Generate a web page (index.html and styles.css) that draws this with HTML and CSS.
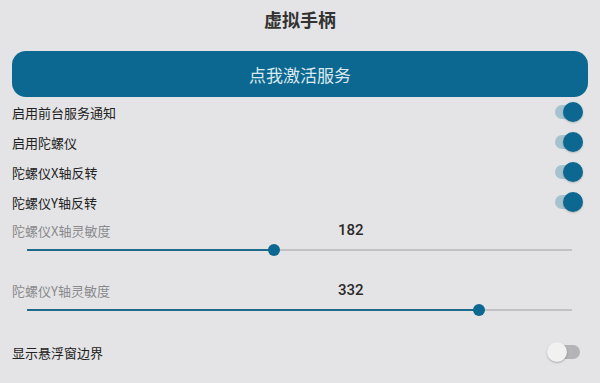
FILE: index.html
```html
<!DOCTYPE html>
<html lang="zh-CN">
<head>
    <meta charset="UTF-8">
    <meta name="viewport" content="width=device-width, initial-scale=1.0">
    <title>虚拟手柄</title>
    <link rel="stylesheet" href="styles.css">
</head>
<body>

    <div class="page">
        <h1 class="title">虚拟手柄</h1>

        <button class="activate">点我激活服务</button>

        <div class="row">
            <span>启用前台服务通知</span>
            <span class="switch on"><span class="track"></span><span class="thumb"></span></span>
        </div>
        <div class="row">
            <span>启用陀螺仪</span>
            <span class="switch on"><span class="track"></span><span class="thumb"></span></span>
        </div>
        <div class="row">
            <span>陀螺仪X轴反转</span>
            <span class="switch on"><span class="track"></span><span class="thumb"></span></span>
        </div>
        <div class="row">
            <span>陀螺仪Y轴反转</span>
            <span class="switch on"><span class="track"></span><span class="thumb"></span></span>
        </div>

        <div class="slider-block">
            <div class="slider-head">
                <span class="slider-label">陀螺仪X轴灵敏度</span>
                <span class="slider-value">182</span>
            </div>
            <div class="slider">
                <div class="slider-fill" style="width: 45.3%"></div>
                <div class="slider-thumb" style="left: 45.3%"></div>
            </div>
        </div>

        <div class="slider-block">
            <div class="slider-head">
                <span class="slider-label">陀螺仪Y轴灵敏度</span>
                <span class="slider-value">332</span>
            </div>
            <div class="slider">
                <div class="slider-fill" style="width: 83%"></div>
                <div class="slider-thumb" style="left: 83%"></div>
            </div>
        </div>

        <div class="row">
            <span>显示悬浮窗边界</span>
            <span class="switch off"><span class="track"></span><span class="thumb"></span></span>
        </div>
    </div>

</body>
</html>
```

FILE: styles.css
```css
body {
    margin: 0;
    background-color: #e4e4e6;
    font-family: "Noto Sans CJK SC", "Noto Sans", Roboto, sans-serif;
    color: #222;
}

.page {
    width: 600px;
    height: 383px;
    overflow: hidden;
}

.title {
    margin: 0;
    height: 38px;
    line-height: 38px;
    text-align: center;
    font-size: 18px;
    font-weight: bold;
    color: #333;
}

.activate {
    display: block;
    width: 576px;
    height: 46px;
    margin: 13px 0 1px 12px;
    padding: 0;
    border: none;
    border-radius: 14px;
    background-color: #0c6890;
    color: #dbe9ef;
    font-family: inherit;
    font-size: 17px;
}

.row {
    display: flex;
    align-items: center;
    justify-content: space-between;
    height: 30px;
    padding-left: 12px;
    font-size: 13px;
    margin-top: -1px;
    margin-bottom: 1px;
}

/* toggle switch */
.switch {
    position: relative;
    width: 30px;
    height: 20px;
    margin-right: 17px;
}

.switch .track {
    position: absolute;
    left: 2px;
    top: 3px;
    width: 25px;
    height: 14px;
    border-radius: 7px;
    background-color: #a7c2cf;
}

.switch .thumb {
    position: absolute;
    top: 0;
    width: 20px;
    height: 20px;
    border-radius: 50%;
}

.switch.on .thumb {
    left: 10px;
    background-color: #0c6890;
    box-shadow: 0 1px 2px rgba(0, 0, 0, 0.2);
}

.switch.off {
    margin-right: 23px;
}

.switch.off .track {
    left: 8px;
    background-color: #b4b4b6;
}

.switch.off .thumb {
    left: 0;
    background-color: #f1f1f1;
    box-shadow: 0 1px 2px rgba(0, 0, 0, 0.25);
}

/* sliders */
.slider-block {
    height: 60px;
}

.slider-head {
    display: flex;
    align-items: center;
    height: 28px;
    padding-left: 12px;
}

.slider-label {
    width: 326px;
    font-size: 13px;
    color: #8a8a8c;
    margin-top: -3px;
}

.slider-value {
    font-family: Roboto, "Noto Sans", sans-serif;
    font-size: 15px;
    font-weight: 500;
    color: #2a2a2a;
    margin-top: -4px;
}

.slider {
    position: relative;
    margin: 3px 28px 0 27px;
    height: 2px;
    background-color: #c2c2c5;
}

.slider-fill {
    height: 2px;
    background-color: #1d6a8c;
}

.slider-thumb {
    position: absolute;
    top: -5px;
    width: 12px;
    height: 12px;
    margin-left: -6px;
    border-radius: 50%;
    background-color: #0c6890;
}
```
